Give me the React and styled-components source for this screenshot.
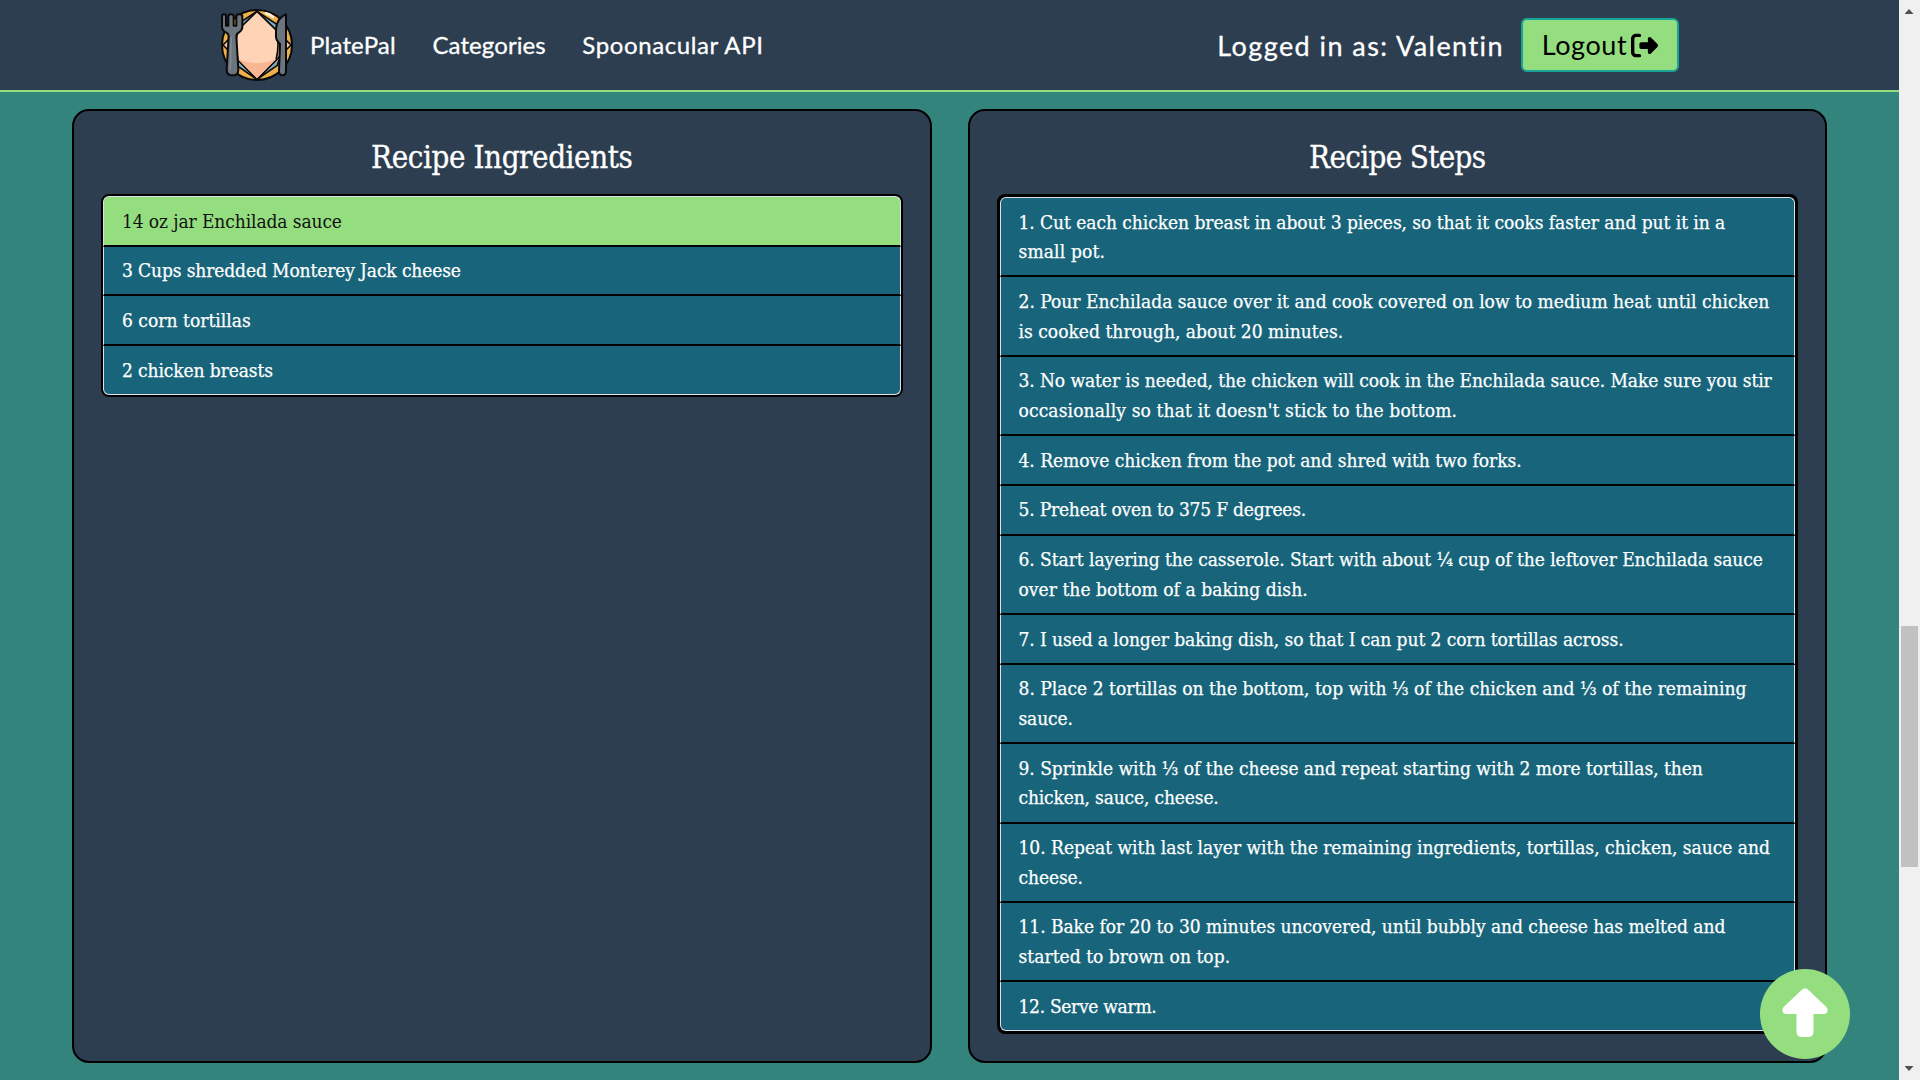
import React from "react";
import styled, { createGlobalStyle } from "styled-components";
import { FaRightFromBracket } from "react-icons/fa6";

const color = {
  navy: "#2c3e50",
  teal: "#32847c",
  tile: "#18657b",
  green: "#94de80",
  white: "#ffffff",
  line: "#dee2e6",
};

const GlobalStyle = createGlobalStyle`
  *, *::before, *::after { box-sizing: border-box; }
  body {
    margin: 0;
    overflow: hidden;
    background: ${color.teal};
    color: ${color.white};
    font-family: "DejaVu Serif", "Noto Sans", serif;
    font-stretch: condensed;
  }
`;

const Screen = styled.div`
  display: grid;
  grid-template-columns: 1fr 21px;
  height: 100vh;
  overflow: hidden;
`;

const Page = styled.div`
  display: flex;
  flex-direction: column;
  min-width: 0;
`;

const Header = styled.header`
  display: flex;
  align-items: center;
  flex: none;
  height: 92px;
  padding: 0 220px;
  background: ${color.navy};
  border-bottom: 2px solid ${color.green};
  font-family: Lato, sans-serif;
  font-stretch: normal;
  white-space: nowrap;
`;

const Logo = styled.svg`
  flex: none;
  width: 74px;
  height: 74px;
`;

const Nav = styled.nav`
  display: flex;
  gap: 36.5px;
  margin-left: 16px;
  padding-bottom: 1px;
`;

const NavLink = styled.a`
  color: ${color.white};
  font-size: 24px;
  line-height: 36px;
  letter-spacing: ${(p) => p.$track || 0}px;
  -webkit-text-stroke: 0.3px currentColor;
`;

const Account = styled.div`
  display: flex;
  align-items: center;
  margin-left: auto;
  gap: 17px;
`;

const UserName = styled.span`
  padding-top: 1px;
  font-size: 27px;
  line-height: 36px;
  letter-spacing: 1.45px;
  -webkit-text-stroke: 0.3px currentColor;
`;

const LogoutButton = styled.button`
  display: flex;
  align-items: center;
  justify-content: center;
  gap: 4px;
  width: 158px;
  height: 54px;
  padding: 0;
  border: 2px solid #16a596;
  border-radius: 6px;
  background: ${color.green};
  color: #000;
  font: 27px/36px Lato, sans-serif;
  letter-spacing: 0.6px;

  svg {
    flex: none;
    width: 27px;
    height: 27px;
  }
`;

const Columns = styled.main`
  display: grid;
  grid-template-columns: 1fr 1fr;
  gap: 36px;
  padding: 17px 72px;
`;

const Card = styled.section`
  height: 954px;
  padding: 27px;
  border: 2px solid #000;
  border-radius: 17px;
  background: ${color.navy};
`;

const Title = styled.h2`
  height: 56px;
  margin: 0;
  font-size: 31px;
  font-weight: 400;
  line-height: 38px;
  text-align: center;
  letter-spacing: ${(p) => p.$track}px;
  -webkit-text-stroke: 0.3px currentColor;
`;

const List = styled.ul`
  margin: 0;
  padding: 0;
  list-style: none;
  border: ${(p) => p.$frame}px solid #000;
  border-radius: 8px;
  background: #000;
`;

const Item = styled.li`
  padding: 9.5px 16px 8.5px 18px;
  border: 0 solid ${color.line};
  border-width: 0 1px 2px;
  border-bottom-color: #000;
  background: ${(p) => (p.$active ? color.green : color.tile)};
  color: ${(p) => (p.$active ? "#111" : color.white)};
  font-size: 19px;
  line-height: 29.7px;
  -webkit-text-stroke: ${(p) => (p.$active ? 0 : 0.25)}px currentColor;

  &:first-child {
    border-top-width: 1px;
    border-radius: 6px 6px 0 0;
  }
  &:last-child {
    border-bottom: 1px solid ${color.line};
    border-radius: 0 0 6px 6px;
  }
`;

const Line = styled.span`
  display: block;
  white-space: nowrap;
  letter-spacing: ${(p) => p.$track}px;
`;

const ToTop = styled.button`
  position: fixed;
  left: 1760px;
  top: 969px;
  width: 90px;
  height: 90px;
  padding: 0;
  border: 0;
  border-radius: 50%;
  background: ${color.green};

  svg {
    display: block;
    width: 90px;
    height: 90px;
  }
`;

const ScrollTrack = styled.div`
  display: grid;
  grid-template-rows: 9px 5px 612px 241px 199px 5px 9px;
  justify-items: center;
  padding-right: 1px;
  background: #f0f0f0;
`;

const ScrollArrow = styled.span`
  grid-row: ${(p) => (p.$down ? 6 : 2)};
  width: 9px;
  height: 5px;
  background: #505050;
  clip-path: ${(p) =>
    p.$down ? "polygon(0 0, 100% 0, 50% 100%)" : "polygon(50% 0, 100% 100%, 0 100%)"};
`;

const ScrollThumb = styled.span`
  grid-row: 4;
  width: 17px;
  background: #c1c1c1;
`;

const ingredients = [
  [["14 oz jar Enchilada sauce", -0.1]],
  [["3 Cups shredded Monterey Jack cheese", -0.12]],
  [["6 corn tortillas", 0.03]],
  [["2 chicken breasts", -0.1]],
];

const steps = [
  [["1. Cut each chicken breast in about 3 pieces, so that it cooks faster and put it in a", -0.05], ["small pot.", 0.15]],
  [["2. Pour Enchilada sauce over it and cook covered on low to medium heat until chicken", 0.01], ["is cooked through, about 20 minutes.", 0.03]],
  [["3. No water is needed, the chicken will cook in the Enchilada sauce. Make sure you stir", -0.08], ["occasionally so that it doesn't stick to the bottom.", 0.14]],
  [["4. Remove chicken from the pot and shred with two forks.", -0.02]],
  [["5. Preheat oven to 375 F degrees.", -0.2]],
  [["6. Start layering the casserole. Start with about ¼ cup of the leftover Enchilada sauce", -0.05], ["over the bottom of a baking dish.", 0.05]],
  [["7. I used a longer baking dish, so that I can put 2 corn tortillas across.", -0.08]],
  [["8. Place 2 tortillas on the bottom, top with ⅓ of the chicken and ⅓ of the remaining", 0.02], ["sauce.", -0.15]],
  [["9. Sprinkle with ⅓ of the cheese and repeat starting with 2 more tortillas, then", -0.03], ["chicken, sauce, cheese.", -0.15]],
  [["10. Repeat with last layer with the remaining ingredients, tortillas, chicken, sauce and", -0.01], ["cheese.", -0.1]],
  [["11. Bake for 20 to 30 minutes uncovered, until bubbly and cheese has melted and", -0.04], ["started to brown on top.", 0.04]],
  [["12. Serve warm.", -0.3]],
];

function PlateLogo() {
  return (
    <Logo viewBox="60 24 222 222" stroke="#0a0a0a" strokeWidth="6" strokeLinejoin="round" strokeLinecap="round">
      <circle cx="171" cy="135" r="105" fill="#eeb14c" />
      <path d="M198 40Q210 43 219 51" stroke="#fff3d6" strokeWidth="8" />
      <path d="M171 34L232 74L252 135L232 196L171 238L110 196L90 135L110 74Z" fill="#7fa9bd" strokeWidth="5" />
      <path d="M171 34L273 135L171 238L69 135Z" fill="#fcc5a3" strokeWidth="5" />
      <path d="M171 34L228 90Q240 135 228 180L171 238L114 180Q102 135 114 90Z" fill="#ffd3b6" strokeWidth="5" />
      <path d="M113 176Q171 202 229 176L227 179L171 235L115 179Z" fill="#f8b692" stroke="none" />
      <path
        d="M66 50Q66 43 72 43Q78 43 78 50V77H85V50Q85 43 93 43Q101 43 101 50V77H109V50Q109 43 118 43Q127 43 127 50V81Q127 91 116 98Q109 102 109 108L115 209Q115 226 98 226Q80 226 80 209L86 108Q86 102 79 98Q66 91 66 81Z"
        fill="#6c747d"
      />
      <path d="M94 112L91 208" stroke="#858d96" strokeWidth="4" />
      <path d="M258 43Q229 54 228 88V112Q228 120 240 132L237 213Q237 226 247 226Q258 226 258 213Z" fill="#6c747d" />
    </Logo>
  );
}

function RecipeCard({ title, track, frame, rows, activeIndex }) {
  return (
    <Card>
      <Title $track={track}>{title}</Title>
      <List $frame={frame}>
        {rows.map((lines, i) => (
          <Item key={i} $active={i === activeIndex}>
            {lines.map(([text, spacing]) => (
              <Line key={text} $track={spacing}>{text}</Line>
            ))}
          </Item>
        ))}
      </List>
    </Card>
  );
}

export default function App() {
  return (
    <>
      <GlobalStyle />
      <Screen>
        <Page>
          <Header>
            <PlateLogo />
            <Nav>
              <NavLink $track={0.2}>PlatePal</NavLink>
              <NavLink $track={0.1}>Categories</NavLink>
              <NavLink $track={0.6}>Spoonacular API</NavLink>
            </Nav>
            <Account>
              <UserName>Logged in as: Valentin</UserName>
              <LogoutButton>
                Logout
                <FaRightFromBracket />
              </LogoutButton>
            </Account>
          </Header>
          <Columns>
            <RecipeCard title="Recipe Ingredients" track={-0.4} frame={2} rows={ingredients} activeIndex={0} />
            <RecipeCard title="Recipe Steps" track={-0.65} frame={3} rows={steps} />
          </Columns>
        </Page>
        <ScrollTrack>
          <ScrollArrow />
          <ScrollThumb />
          <ScrollArrow $down />
        </ScrollTrack>
      </Screen>
      <ToTop aria-label="Back to top">
        <svg viewBox="0 0 90 90" fill="#fff">
          <path d="M41.8 20.8Q45 17.8 48.2 20.8L66.6 38.2Q68.6 40.4 67.4 42.8Q66.4 45 63.8 45H53.5V62.5Q53.5 68 48 68H42Q36.5 68 36.5 62.5V45H26.2Q23.6 45 22.6 42.8Q21.4 40.4 23.4 38.2Z" />
        </svg>
      </ToTop>
    </>
  );
}
